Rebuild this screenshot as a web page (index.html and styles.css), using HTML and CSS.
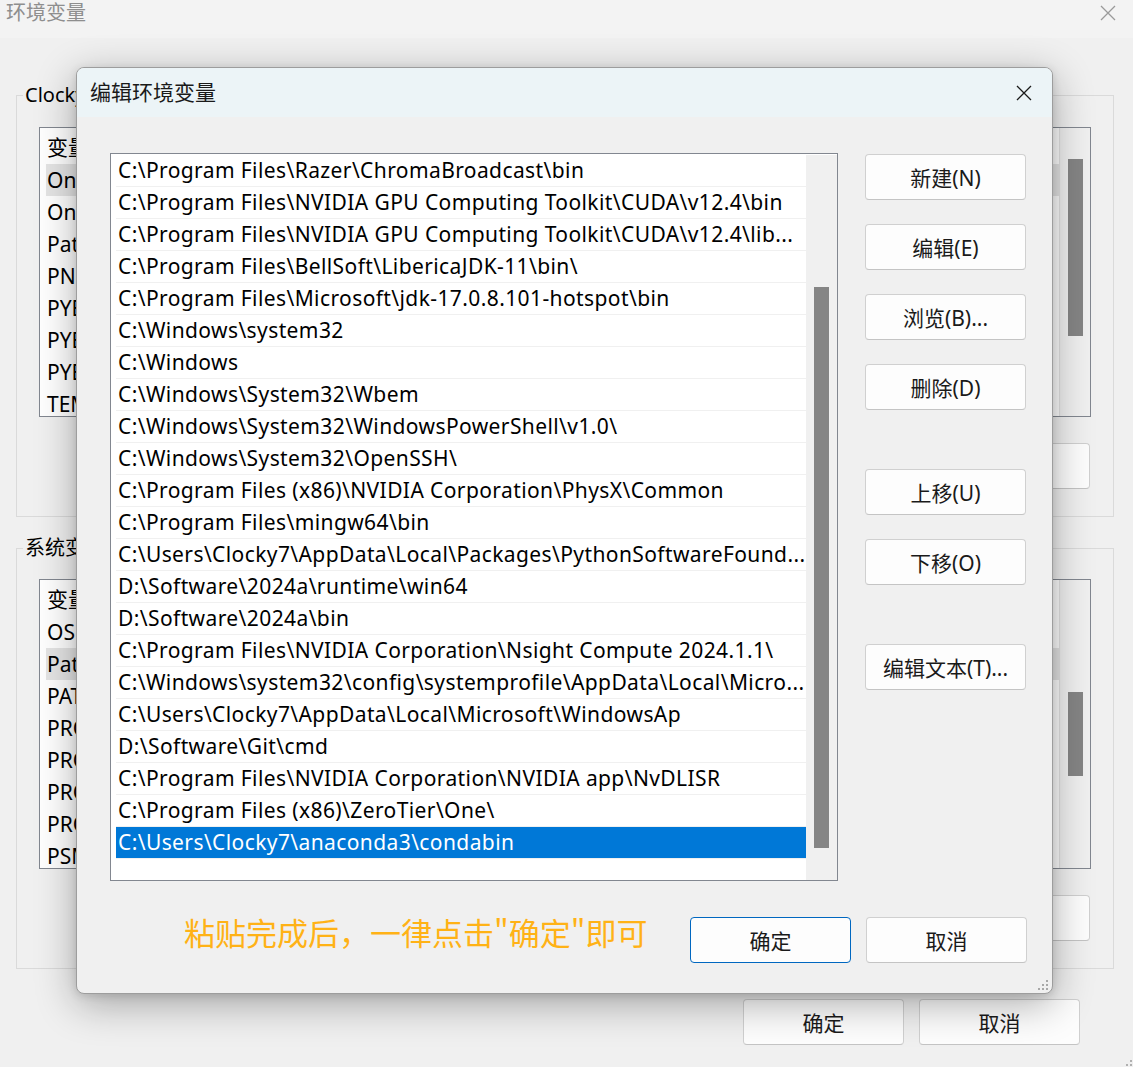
FILE: index.html
```html
<!DOCTYPE html>
<html lang="zh-CN">
<head>
<meta charset="utf-8">
<title>环境变量</title>
<link rel="stylesheet" href="styles.css">
</head>
<body>
<div class="main-win">
  <div class="main-title">
    <span class="main-title-text">环境变量</span>
    <svg class="main-close" viewBox="0 0 16 16"><path d="M1 1L15 15M15 1L1 15" stroke="#9a9a9a" stroke-width="1.3" fill="none"/></svg>
  </div>
  <div class="main-body">
    <fieldset class="group group-user">
      <legend>Clocky7 的用户变量(U)</legend>
      <div class="bg-list">
        <div class="bg-rows">
          <div class="bg-head"><span class="c1">变量</span><span>值</span></div>
          <div class="bg-row sel"><span class="c1">OneDrive</span></div>
          <div class="bg-row"><span class="c1">OneDriveConsumer</span></div>
          <div class="bg-row"><span class="c1">Path</span></div>
          <div class="bg-row"><span class="c1">PNPM_HOME</span></div>
          <div class="bg-row"><span class="c1">PYENV</span></div>
          <div class="bg-row"><span class="c1">PYENV_HOME</span></div>
          <div class="bg-row"><span class="c1">PYENV_ROOT</span></div>
          <div class="bg-row"><span class="c1">TEMP</span></div>
        </div>
        <div class="bg-track"><div class="bg-thumb thumb-user"></div></div>
      </div>
      <div class="grp-btns">
        <button class="btn">新建(N)...</button>
        <button class="btn">编辑(E)...</button>
        <button class="btn">删除(D)</button>
      </div>
    </fieldset>
    <fieldset class="group group-sys">
      <legend>系统变量(S)</legend>
      <div class="bg-list">
        <div class="bg-rows">
          <div class="bg-head"><span class="c1">变量</span><span>值</span></div>
          <div class="bg-row"><span class="c1">OS</span></div>
          <div class="bg-row sel"><span class="c1">Path</span></div>
          <div class="bg-row"><span class="c1">PATHEXT</span></div>
          <div class="bg-row"><span class="c1">PROCESSOR_ARCHITECTURE</span></div>
          <div class="bg-row"><span class="c1">PROCESSOR_IDENTIFIER</span></div>
          <div class="bg-row"><span class="c1">PROCESSOR_LEVEL</span></div>
          <div class="bg-row"><span class="c1">PROCESSOR_REVISION</span></div>
          <div class="bg-row"><span class="c1">PSModulePath</span></div>
        </div>
        <div class="bg-track"><div class="bg-thumb thumb-sys"></div></div>
      </div>
      <div class="grp-btns grp-btns-sys">
        <button class="btn">新建(W)...</button>
        <button class="btn">编辑(I)...</button>
        <button class="btn">删除(L)</button>
      </div>
    </fieldset>
    <div class="main-foot">
      <button class="btn">确定</button>
      <button class="btn">取消</button>
    </div>
  </div>
  <svg class="main-grip" viewBox="0 0 6 6"><rect x="4" y="0" width="2" height="2" fill="#b0b0b0"/><rect x="0" y="4" width="2" height="2" fill="#b0b0b0"/><rect x="4" y="4" width="2" height="2" fill="#b0b0b0"/></svg>
</div>

<div class="dialog">
  <div class="dlg-title">
    <span class="dlg-title-text">编辑环境变量</span>
    <svg class="dlg-close" viewBox="0 0 16 16"><path d="M1 1L15 15M15 1L1 15" stroke="#1a1a1a" stroke-width="1.3" fill="none"/></svg>
  </div>
  <div class="dlg-body">
    <div class="dlg-main">
      <div class="listbox">
        <div class="rows">
          <div class="row">C:\Program Files\Razer\ChromaBroadcast\bin</div>
          <div class="row">C:\Program Files\NVIDIA GPU Computing Toolkit\CUDA\v12.4\bin</div>
          <div class="row">C:\Program Files\NVIDIA GPU Computing Toolkit\CUDA\v12.4\lib...</div>
          <div class="row">C:\Program Files\BellSoft\LibericaJDK-11\bin\</div>
          <div class="row">C:\Program Files\Microsoft\jdk-17.0.8.101-hotspot\bin</div>
          <div class="row">C:\Windows\system32</div>
          <div class="row">C:\Windows</div>
          <div class="row">C:\Windows\System32\Wbem</div>
          <div class="row">C:\Windows\System32\WindowsPowerShell\v1.0\</div>
          <div class="row">C:\Windows\System32\OpenSSH\</div>
          <div class="row">C:\Program Files (x86)\NVIDIA Corporation\PhysX\Common</div>
          <div class="row">C:\Program Files\mingw64\bin</div>
          <div class="row">C:\Users\Clocky7\AppData\Local\Packages\PythonSoftwareFound...</div>
          <div class="row">D:\Software\2024a\runtime\win64</div>
          <div class="row">D:\Software\2024a\bin</div>
          <div class="row">C:\Program Files\NVIDIA Corporation\Nsight Compute 2024.1.1\</div>
          <div class="row">C:\Windows\system32\config\systemprofile\AppData\Local\Micro...</div>
          <div class="row">C:\Users\Clocky7\AppData\Local\Microsoft\WindowsAp</div>
          <div class="row">D:\Software\Git\cmd</div>
          <div class="row">C:\Program Files\NVIDIA Corporation\NVIDIA app\NvDLISR</div>
          <div class="row">C:\Program Files (x86)\ZeroTier\One\</div>
          <div class="row selected">C:\Users\Clocky7\anaconda3\condabin</div>
        </div>
        <div class="track"><div class="thumb"></div></div>
      </div>
      <div class="btn-col">
        <button class="btn">新建(N)</button>
        <button class="btn">编辑(E)</button>
        <button class="btn">浏览(B)...</button>
        <button class="btn">删除(D)</button>
        <button class="btn btn-sep">上移(U)</button>
        <button class="btn">下移(O)</button>
        <button class="btn btn-sep">编辑文本(T)...</button>
      </div>
    </div>
    <div class="dlg-foot">
      <span class="hint">粘贴完成后，一律点击"确定"即可</span>
      <div class="foot-btns">
        <button class="btn btn-default">确定</button>
        <button class="btn">取消</button>
      </div>
    </div>
  </div>
  <svg class="dlg-grip" viewBox="0 0 12 12">
    <rect x="9" y="1" width="2" height="2" fill="#a8a8a8"/>
    <rect x="5" y="5" width="2" height="2" fill="#a8a8a8"/>
    <rect x="9" y="5" width="2" height="2" fill="#a8a8a8"/>
    <rect x="1" y="9" width="2" height="2" fill="#a8a8a8"/>
    <rect x="5" y="9" width="2" height="2" fill="#a8a8a8"/>
    <rect x="9" y="9" width="2" height="2" fill="#a8a8a8"/>
  </svg>
</div>
</body>
</html>
```

FILE: styles.css
```css
* { box-sizing: border-box; }
html, body { margin: 0; padding: 0; }
body {
  width: 1133px;
  height: 1067px;
  overflow: hidden;
  position: relative;
  background: #f0f0f0;
  font-family: "Noto Sans", "Noto Sans CJK SC", sans-serif;
  font-size: 21px;
  color: #000;
}
button { font-family: inherit; }

/* background window */
.main-win { position: relative; height: 1067px; }
.main-title {
  height: 38px;
  background: #f3f3f3;
  display: flex;
  justify-content: space-between;
  align-items: flex-start;
  padding: 0 17px 0 6px;
}
.main-title-text { color: #8e8e8e; line-height: 26px; font-size: 20px; }
.main-close { width: 16px; height: 16px; margin-top: 5px; }
.main-body { padding: 44px 19px 0 16px; }
.group {
  margin: 0;
  border: 1px solid #dadada;
  padding: 19px 22px 27px;
  min-width: 0;
}
.group legend {
  margin-left: -16px;
  padding: 0 2px;
  line-height: 26px;
  font-size: 20px;
  white-space: nowrap;
}
.group-sys { margin-top: 18px; padding-top: 18px; }
.bg-list {
  height: 290px;
  border: 1px solid #828790;
  background: #fff;
  display: flex;
  overflow: hidden;
}
.bg-rows { flex: 1; padding-left: 6px; overflow: hidden; }
.bg-head, .bg-row {
  display: flex;
  white-space: nowrap;
  padding-left: 1px;
}
.bg-head { height: 36px; padding-top: 3px; line-height: 33px; }
.bg-row { height: 32px; line-height: 32px; }
.bg-row.sel { background: #e5e5e5; }
.c1 { width: 300px; }
.bg-track {
  width: 31px;
  background: #f0f0f0;
  border-left: 1px solid #e2e2e2;
  padding-left: 8px;
}
.bg-thumb { width: 15px; background: #858585; }
.thumb-user { margin-top: 31px; height: 177px; }
.thumb-sys { margin-top: 112px; height: 84px; }
.grp-btns {
  display: flex;
  justify-content: flex-end;
  gap: 15px;
  margin-top: 26px;
  padding-right: 1px;
}
.grp-btns-sys { margin-top: 26px; }
.main-foot {
  display: flex;
  justify-content: flex-end;
  gap: 15px;
  margin-top: 30px;
  padding-right: 34px;
}
.main-grip { position: absolute; right: 1px; bottom: 1px; width: 6px; height: 6px; }

.btn {
  width: 161px;
  height: 46px;
  background: #fdfdfd;
  border: 1px solid #d0d0d0;
  border-bottom-color: #c4c4c4;
  border-radius: 4px;
  font-size: 21px;
  color: #1a1a1a;
  padding: 0 0 1px;
}

/* dialog */
.dialog {
  position: absolute;
  left: 76px;
  top: 67px;
  width: 977px;
  height: 927px;
  border: 1px solid #9d9d9d;
  border-radius: 8px;
  background: #f0f0f0;
  box-shadow: 0 10px 40px rgba(0, 0, 0, 0.32), 0 2px 8px rgba(0, 0, 0, 0.12);
  overflow: hidden;
  display: flex;
  flex-direction: column;
}
.dlg-title {
  height: 49px;
  flex: none;
  background: #ecf4f7;
  display: flex;
  align-items: center;
  justify-content: space-between;
  padding: 0 20px 3px 13px;
}
.dlg-title-text { font-size: 21px; color: #1a1a1a; }
.dlg-close { width: 16px; height: 16px; margin-top: 3px; }
.dlg-body {
  flex: 1;
  padding: 36px 25px 29px 33px;
  display: flex;
  flex-direction: column;
}
.dlg-main { display: flex; }
.listbox {
  width: 728px;
  height: 728px;
  border: 1px solid #828790;
  background: #fff;
  padding: 1px 0 0 5px;
  display: flex;
}
.rows { width: 690px; }
.row {
  height: 32px;
  line-height: 31px;
  border-bottom: 1px solid #f0f0f0;
  padding-left: 2px;
  letter-spacing: 0.4px;
  white-space: nowrap;
  overflow: hidden;
}
.row.selected { background: #0078d7; color: #fff; }
.track {
  width: 31px;
  background: #f0f0f0;
  padding-left: 8px;
}
.thumb {
  width: 15px;
  margin-top: 132px;
  height: 561px;
  background: #858585;
}
.btn-col {
  margin-left: 27px;
  padding-top: 1px;
  display: flex;
  flex-direction: column;
  gap: 24px;
}
.btn-col .btn-sep { margin-top: 35px; }
.dlg-foot {
  margin-top: 36px;
  display: flex;
  align-items: flex-start;
}
.hint {
  margin-left: 74px;
  margin-top: -1px;
  font-size: 31px;
  line-height: 32px;
  color: #ffb216;
  font-family: "Noto Sans CJK SC", "Noto Sans", sans-serif;
  white-space: nowrap;
}
.foot-btns {
  margin-left: auto;
  display: flex;
  gap: 15px;
}
.btn-default { border-color: #0067c0; }
.dlg-grip { position: absolute; right: 3px; bottom: 2px; width: 12px; height: 12px; }
```
